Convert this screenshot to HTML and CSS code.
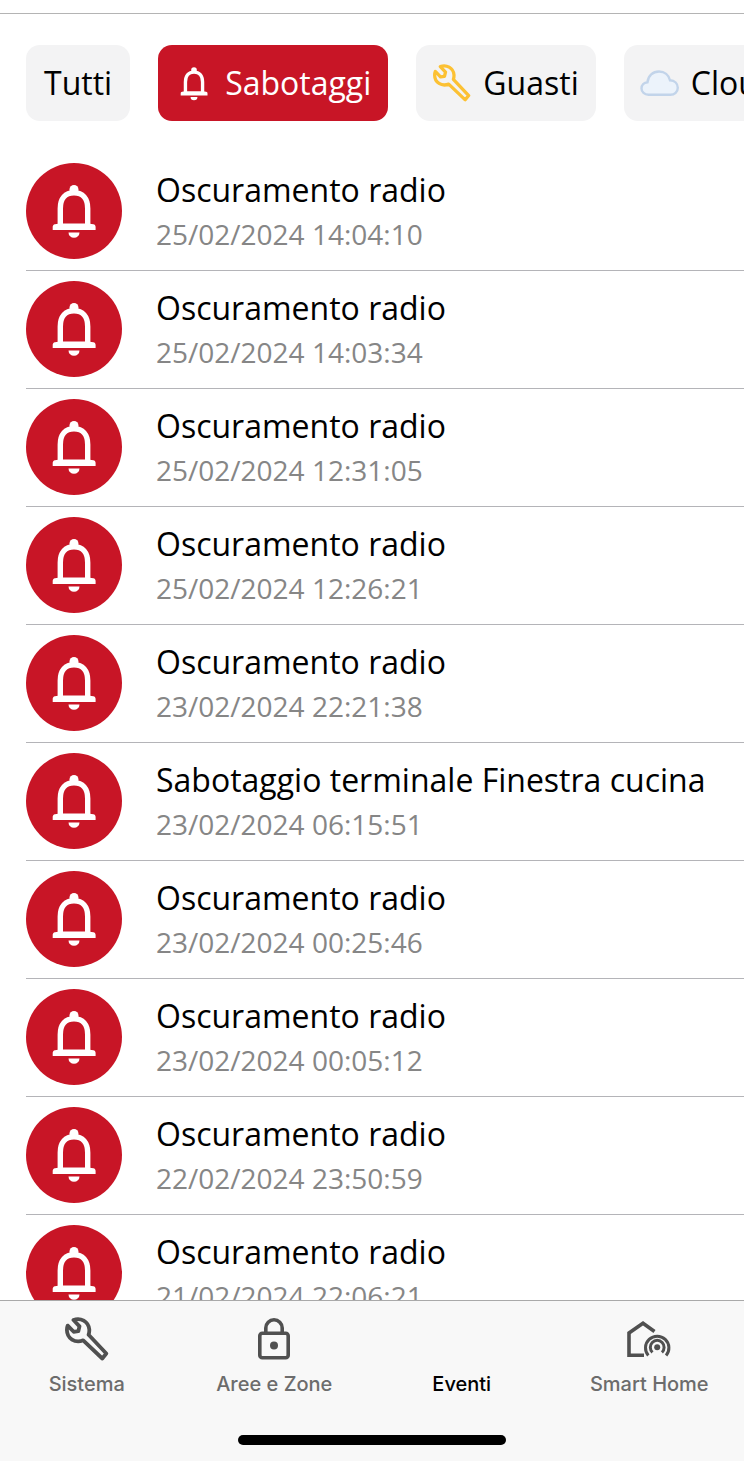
FILE: index.html
```html
<!DOCTYPE html>
<html lang="it">
<head>
<meta charset="utf-8">
<meta name="viewport" content="width=device-width, initial-scale=1">
<title>Eventi</title>
<link rel="stylesheet" href="styles.css">
</head>
<body>
<svg class="sprite" aria-hidden="true">
  <symbol id="bell" viewBox="24 20 48 56">
    <circle cx="48" cy="26.500" r="4.500" fill="currentColor"/>
    <path d="M34.300 64V45.500C34.300 35.500 39.500 29.800 48 29.800S61.700 35.500 61.700 45.500V64" fill="none" stroke="currentColor" stroke-width="5.400"/>
    <path d="M26.700 67v-3c0-1.500.8-2.400 2.200-2.700L34 60.500h28l5.400.8c1.400.3 2.200 1.200 2.200 2.700v3zM42.500 69.500h11a5.500 5.300 0 0 1-11 0z" fill="currentColor"/>
  </symbol>
  <symbol id="wrench" viewBox="0 0 44 44">
    <path d="M8.500 3C15.500.2 23.500 4.500 24.300 12.500c.1 2 0 3.300-.7 5.200L41.300 36.500l-4 5L18.200 23.300C10 26.500 2 21.500 1.900 13c0-1.500.2-3 .8-4.400l6 6.200 4.600-.6 1.200-4.800z" fill="none" stroke="currentColor" stroke-width="3.800" stroke-linejoin="round"/>
  </symbol>
</svg>

<nav class="filters" aria-label="Filtri">
  <button class="chip chip-plain" type="button">Tutti</button>
  <button class="chip chip-active" type="button" aria-pressed="true">
    <span class="chip-icon"><svg class="icon-bell-small" aria-hidden="true"><use href="#bell"/></svg></span>Sabotaggi
  </button>
  <button class="chip" type="button">
    <span class="chip-icon fault"><svg class="icon-wrench-small" aria-hidden="true"><use href="#wrench"/></svg></span>Guasti
  </button>
  <button class="chip" type="button">
    <span class="chip-icon cloud"><svg class="icon-cloud" viewBox="0 0 40 40" aria-hidden="true"><path d="M8.500 31.800C4.500 31.800 1.500 29 1.500 25.500c0-3.400 2.500-6 6-6.300C8.100 12.500 13 8.500 19 8.500c5.500 0 9.800 3.300 11 8.800 4.700.3 7.800 3.500 7.800 7.500 0 4.200-3.300 7-7.300 7z" fill="#ecf3fb" stroke="currentColor" stroke-width="2.400"/></svg></span>Cloud
  </button>
</nav>

<main class="events">
  <ul class="event-list">
    <li class="event"><span class="badge"><svg class="icon-bell" aria-hidden="true"><use href="#bell"/></svg></span><div class="event-text"><p class="name">Oscuramento radio</p><time class="date">25/02/2024 14:04:10</time></div></li>
    <li class="event"><span class="badge"><svg class="icon-bell" aria-hidden="true"><use href="#bell"/></svg></span><div class="event-text"><p class="name">Oscuramento radio</p><time class="date">25/02/2024 14:03:34</time></div></li>
    <li class="event"><span class="badge"><svg class="icon-bell" aria-hidden="true"><use href="#bell"/></svg></span><div class="event-text"><p class="name">Oscuramento radio</p><time class="date">25/02/2024 12:31:05</time></div></li>
    <li class="event"><span class="badge"><svg class="icon-bell" aria-hidden="true"><use href="#bell"/></svg></span><div class="event-text"><p class="name">Oscuramento radio</p><time class="date">25/02/2024 12:26:21</time></div></li>
    <li class="event"><span class="badge"><svg class="icon-bell" aria-hidden="true"><use href="#bell"/></svg></span><div class="event-text"><p class="name">Oscuramento radio</p><time class="date">23/02/2024 22:21:38</time></div></li>
    <li class="event"><span class="badge"><svg class="icon-bell" aria-hidden="true"><use href="#bell"/></svg></span><div class="event-text"><p class="name">Sabotaggio terminale Finestra cucina</p><time class="date">23/02/2024 06:15:51</time></div></li>
    <li class="event"><span class="badge"><svg class="icon-bell" aria-hidden="true"><use href="#bell"/></svg></span><div class="event-text"><p class="name">Oscuramento radio</p><time class="date">23/02/2024 00:25:46</time></div></li>
    <li class="event"><span class="badge"><svg class="icon-bell" aria-hidden="true"><use href="#bell"/></svg></span><div class="event-text"><p class="name">Oscuramento radio</p><time class="date">23/02/2024 00:05:12</time></div></li>
    <li class="event"><span class="badge"><svg class="icon-bell" aria-hidden="true"><use href="#bell"/></svg></span><div class="event-text"><p class="name">Oscuramento radio</p><time class="date">22/02/2024 23:50:59</time></div></li>
    <li class="event"><span class="badge"><svg class="icon-bell" aria-hidden="true"><use href="#bell"/></svg></span><div class="event-text"><p class="name">Oscuramento radio</p><time class="date">21/02/2024 22:06:21</time></div></li>
  </ul>
</main>

<footer class="bottom">
  <nav class="tabs" aria-label="Navigazione">
    <a class="tab" href="#sistema"><span class="tab-icon"><svg width="44" height="44" aria-hidden="true"><use href="#wrench"/></svg></span>Sistema</a>
    <a class="tab" href="#aree"><span class="tab-icon"><svg width="32" height="42" viewBox="0 0 32 42" fill="none" stroke="currentColor" stroke-width="3.600" aria-hidden="true"><rect x="1.800" y="15.300" width="28.400" height="24.500" rx="2.500"/><path d="M7.800 15.500V10a8.200 8.200 0 0 1 16.400 0v5.500"/><circle cx="16" cy="27.500" r="4" fill="currentColor" stroke="none"/></svg></span>Aree e Zone</a>
    <a class="tab tab-active" href="#eventi" aria-current="page"><span class="tab-icon"></span>Eventi</a>
    <a class="tab" href="#smarthome"><span class="tab-icon"><svg width="44" height="37" viewBox="0 0 44 37" fill="none" stroke="currentColor" stroke-width="3.600" aria-hidden="true"><path d="M17 34.300H2V12L16 2.300l11.500 8.200"/><g stroke-width="3"><path d="M21.300 34.500a11.700 11.700 0 1 1 17.800 0"/><path d="M25.500 31.300a6.900 6.900 0 1 1 9.400 0"/></g><circle cx="30.200" cy="26.300" r="3" fill="currentColor" stroke="none"/></svg></span>Smart Home</a>
  </nav>
  <div class="home-bar"></div>
</footer>
</body>
</html>
```
FILE: styles.css
```css
* {
  box-sizing: border-box;
}

body {
  margin: 0;
  height: 100vh;
  display: flex;
  flex-direction: column;
  padding-top: 13px;
  overflow: hidden;
  background: #fff;
  color: #000;
  font-family: "Open Sans", "Noto Sans", sans-serif;
}

.sprite {
  display: none;
}

.filters {
  flex: none;
  display: flex;
  gap: 28px;
  padding: 31px 0 32px 26px;
  border-top: 1px solid #b4b4b4;
  overflow: hidden;
}

.chip {
  flex: none;
  display: flex;
  align-items: center;
  gap: 11px;
  height: 76px;
  padding: 0 17px 0 16px;
  border: 0;
  border-radius: 14px;
  background: #f3f3f4;
  color: #000;
  font-family: inherit;
  font-size: 32px;
  line-height: 44px;
}

.chip-plain {
  padding: 0 18px;
}

.chip-active {
  background: #c81526;
  color: #fff;
}

.chip-icon {
  display: flex;
  align-items: center;
  justify-content: center;
  width: 40px;
  height: 40px;
}

.icon-bell-small {
  width: 30px;
  height: 35px;
}

.icon-wrench-small {
  width: 38px;
  height: 38px;
}

.icon-cloud {
  width: 40px;
  height: 40px;
}

.fault {
  color: #fcc133;
}

.cloud {
  color: #c2d4ea;
}

.events {
  flex: 1;
  min-height: 0;
  overflow: hidden;
  padding-left: 26px;
}

.event-list {
  margin: 0;
  padding: 0;
  list-style: none;
}

.event {
  display: flex;
  align-items: center;
  gap: 34px;
  padding: 10px 0 11px;
  border-bottom: 1px solid #b4b4b8;
}

.badge {
  flex: none;
  display: flex;
  align-items: center;
  justify-content: center;
  width: 96px;
  height: 96px;
  border-radius: 50%;
  background: #c81526;
  color: #fff;
}

.icon-bell {
  width: 48px;
  height: 56px;
}

.name {
  margin: 0;
  font-size: 32px;
  line-height: 46px;
}

.date {
  display: block;
  color: #868686;
  font-size: 28px;
  line-height: 42px;
}

.bottom {
  flex: none;
  padding: 16px 0;
  border-top: 1px solid #a9a9a9;
  background: #f8f8f8;
}

.tabs {
  display: grid;
  grid-template-columns: repeat(4, 1fr);
  margin: 0 1px 0 -7px;
}

.tab {
  display: flex;
  flex-direction: column;
  align-items: center;
  gap: 11px;
  color: #6c6c6c;
  font-family: Inter, Roboto, sans-serif;
  font-size: 20px;
  font-weight: 500;
  line-height: 24px;
  text-decoration: none;
}

.tab-active {
  color: #000;
}

.tab-icon {
  display: flex;
  align-items: center;
  justify-content: center;
  height: 44px;
  color: #505050;
}

.home-bar {
  width: 36%;
  height: 10px;
  margin: 39px auto 0;
  border-radius: 5px;
  background: #000;
}
```
